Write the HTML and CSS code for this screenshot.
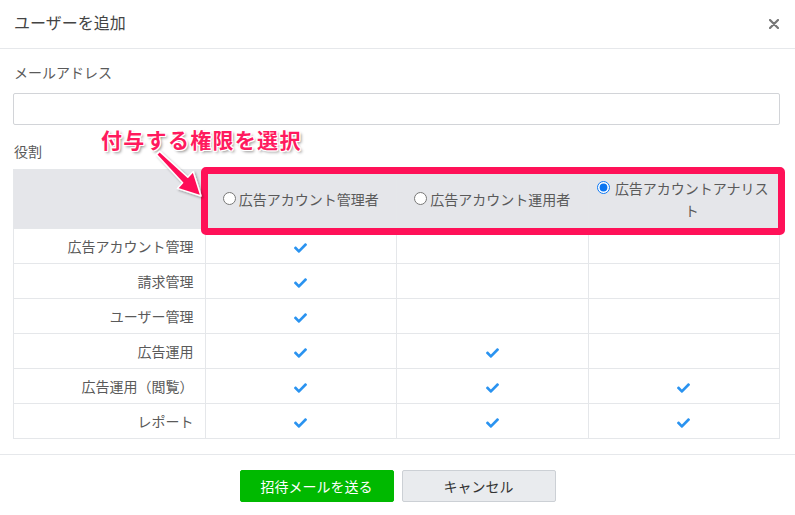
FILE: index.html
```html
<!DOCTYPE html>
<html lang="ja">
<head>
<meta charset="utf-8">
<title>ユーザーを追加</title>
<link rel="stylesheet" href="styles.css">
</head>
<body>
<div class="modal">
  <div class="modal-header">
    <h1 class="title">ユーザーを追加</h1>
    <svg class="close" width="10" height="10" viewBox="0 0 10 10"><path d="M1 1L9 9M9 1L1 9" stroke="#777" stroke-width="2.2" stroke-linecap="round"/></svg>
  </div>
  <div class="modal-body">
    <div class="field-label">メールアドレス</div>
    <input class="input" type="text">
    <div class="field-label role-label">役割</div>
    <table class="roles">
      <thead>
        <tr>
          <th></th>
          <th><label class="radio"><input type="radio" name="role"><span>広告アカウント管理者</span></label></th>
          <th><label class="radio"><input type="radio" name="role"><span>広告アカウント運用者</span></label></th>
          <th><label class="radio"><input type="radio" name="role" checked><span>広告アカウントアナリスト</span></label></th>
        </tr>
      </thead>
      <tbody>
        <tr><td class="name">広告アカウント管理</td><td><svg class="chk" viewBox="0 64 512 384"><path d="M173.898 439.404l-166.4-166.4c-9.997-9.997-9.997-26.206 0-36.204l36.203-36.204c9.997-9.998 26.207-9.998 36.204 0L192 312.69 432.095 72.596c9.997-9.997 26.207-9.997 36.204 0l36.203 36.204c9.997 9.997 9.997 26.206 0 36.204l-294.4 294.401c-9.998 9.997-26.207 9.997-36.204-.001z"/></svg></td><td></td><td></td></tr>
        <tr><td class="name">請求管理</td><td><svg class="chk" viewBox="0 64 512 384"><path d="M173.898 439.404l-166.4-166.4c-9.997-9.997-9.997-26.206 0-36.204l36.203-36.204c9.997-9.998 26.207-9.998 36.204 0L192 312.69 432.095 72.596c9.997-9.997 26.207-9.997 36.204 0l36.203 36.204c9.997 9.997 9.997 26.206 0 36.204l-294.4 294.401c-9.998 9.997-26.207 9.997-36.204-.001z"/></svg></td><td></td><td></td></tr>
        <tr><td class="name">ユーザー管理</td><td><svg class="chk" viewBox="0 64 512 384"><path d="M173.898 439.404l-166.4-166.4c-9.997-9.997-9.997-26.206 0-36.204l36.203-36.204c9.997-9.998 26.207-9.998 36.204 0L192 312.69 432.095 72.596c9.997-9.997 26.207-9.997 36.204 0l36.203 36.204c9.997 9.997 9.997 26.206 0 36.204l-294.4 294.401c-9.998 9.997-26.207 9.997-36.204-.001z"/></svg></td><td></td><td></td></tr>
        <tr><td class="name">広告運用</td><td><svg class="chk" viewBox="0 64 512 384"><path d="M173.898 439.404l-166.4-166.4c-9.997-9.997-9.997-26.206 0-36.204l36.203-36.204c9.997-9.998 26.207-9.998 36.204 0L192 312.69 432.095 72.596c9.997-9.997 26.207-9.997 36.204 0l36.203 36.204c9.997 9.997 9.997 26.206 0 36.204l-294.4 294.401c-9.998 9.997-26.207 9.997-36.204-.001z"/></svg></td><td><svg class="chk" viewBox="0 64 512 384"><path d="M173.898 439.404l-166.4-166.4c-9.997-9.997-9.997-26.206 0-36.204l36.203-36.204c9.997-9.998 26.207-9.998 36.204 0L192 312.69 432.095 72.596c9.997-9.997 26.207-9.997 36.204 0l36.203 36.204c9.997 9.997 9.997 26.206 0 36.204l-294.4 294.401c-9.998 9.997-26.207 9.997-36.204-.001z"/></svg></td><td></td></tr>
        <tr><td class="name">広告運用（閲覧）</td><td><svg class="chk" viewBox="0 64 512 384"><path d="M173.898 439.404l-166.4-166.4c-9.997-9.997-9.997-26.206 0-36.204l36.203-36.204c9.997-9.998 26.207-9.998 36.204 0L192 312.69 432.095 72.596c9.997-9.997 26.207-9.997 36.204 0l36.203 36.204c9.997 9.997 9.997 26.206 0 36.204l-294.4 294.401c-9.998 9.997-26.207 9.997-36.204-.001z"/></svg></td><td><svg class="chk" viewBox="0 64 512 384"><path d="M173.898 439.404l-166.4-166.4c-9.997-9.997-9.997-26.206 0-36.204l36.203-36.204c9.997-9.998 26.207-9.998 36.204 0L192 312.69 432.095 72.596c9.997-9.997 26.207-9.997 36.204 0l36.203 36.204c9.997 9.997 9.997 26.206 0 36.204l-294.4 294.401c-9.998 9.997-26.207 9.997-36.204-.001z"/></svg></td><td><svg class="chk" viewBox="0 64 512 384"><path d="M173.898 439.404l-166.4-166.4c-9.997-9.997-9.997-26.206 0-36.204l36.203-36.204c9.997-9.998 26.207-9.998 36.204 0L192 312.69 432.095 72.596c9.997-9.997 26.207-9.997 36.204 0l36.203 36.204c9.997 9.997 9.997 26.206 0 36.204l-294.4 294.401c-9.998 9.997-26.207 9.997-36.204-.001z"/></svg></td></tr>
        <tr><td class="name">レポート</td><td><svg class="chk" viewBox="0 64 512 384"><path d="M173.898 439.404l-166.4-166.4c-9.997-9.997-9.997-26.206 0-36.204l36.203-36.204c9.997-9.998 26.207-9.998 36.204 0L192 312.69 432.095 72.596c9.997-9.997 26.207-9.997 36.204 0l36.203 36.204c9.997 9.997 9.997 26.206 0 36.204l-294.4 294.401c-9.998 9.997-26.207 9.997-36.204-.001z"/></svg></td><td><svg class="chk" viewBox="0 64 512 384"><path d="M173.898 439.404l-166.4-166.4c-9.997-9.997-9.997-26.206 0-36.204l36.203-36.204c9.997-9.998 26.207-9.998 36.204 0L192 312.69 432.095 72.596c9.997-9.997 26.207-9.997 36.204 0l36.203 36.204c9.997 9.997 9.997 26.206 0 36.204l-294.4 294.401c-9.998 9.997-26.207 9.997-36.204-.001z"/></svg></td><td><svg class="chk" viewBox="0 64 512 384"><path d="M173.898 439.404l-166.4-166.4c-9.997-9.997-9.997-26.206 0-36.204l36.203-36.204c9.997-9.998 26.207-9.998 36.204 0L192 312.69 432.095 72.596c9.997-9.997 26.207-9.997 36.204 0l36.203 36.204c9.997 9.997 9.997 26.206 0 36.204l-294.4 294.401c-9.998 9.997-26.207 9.997-36.204-.001z"/></svg></td></tr>
      </tbody>
    </table>
  </div>
  <div class="modal-footer">
    <button class="btn btn-primary" type="button">招待メールを送る</button>
    <button class="btn btn-default" type="button">キャンセル</button>
  </div>

  <div class="highlight"></div>
  <div class="callout">付与する権限を選択</div>
  <svg class="arrow" width="795" height="515" viewBox="0 0 795 515">
    <defs>
      <filter id="sh" x="-20%" y="-20%" width="150%" height="150%">
        <feDropShadow dx="1.5" dy="1.5" stdDeviation="1.2" flood-color="#000" flood-opacity="0.35"/>
      </filter>
    </defs>
    <polygon points="159.6,151.4 187.8,177.2 193.2,171.6 201,196 177.4,188.4 182.6,182.8 156.4,154.6" fill="#ff1158" stroke="#fff" stroke-width="1.5" stroke-linejoin="round" filter="url(#sh)"/>
  </svg>
</div>
</body>
</html>
```

FILE: styles.css
```css
* { box-sizing: border-box; }
html, body { margin: 0; padding: 0; background: #fff; }
body {
  font-family: "Noto Sans CJK JP", "Noto Sans", "Liberation Sans", sans-serif;
  font-size: 14px;
  color: #5a5a5a;
}
.modal {
  position: relative;
  width: 795px;
  height: 515px;
  background: #fff;
}
.modal-header {
  height: 49px;
  border-bottom: 1px solid #e6e8eb;
  display: flex;
  align-items: flex-start;
  justify-content: space-between;
  padding: 11px 16px 0 14px;
}
.title {
  margin: 0;
  font-size: 16px;
  line-height: 22px;
  font-weight: normal;
  color: #444;
}
.close { margin-top: 8px; }
.modal-body {
  padding: 13px 15px 15px 13px;
}
.field-label {
  font-size: 14px;
  line-height: 20px;
  color: #5a5a5a;
  padding-left: 1px;
}
.input {
  display: block;
  width: 100%;
  height: 32px;
  margin-top: 11px;
  border: 1px solid #d2d4d8;
  border-radius: 2px;
  background: #fff;
  outline: none;
}
.role-label { margin-top: 16px; margin-bottom: 8px; }
.roles {
  width: 767px;
  border-collapse: collapse;
  table-layout: fixed;
}
.roles th, .roles td {
  border: 1px solid #e5e7ea;
  width: 25%;
  text-align: center;
  vertical-align: middle;
  padding: 0 8px;
}
.roles thead th {
  background: #e5e6ea;
  height: 59px;
  font-weight: normal;
  color: #5a5a5a;
}
.roles td { height: 35px; }
.roles td.name { text-align: right; padding-right: 11px; }
.radio {
  display: inline-flex;
  align-items: flex-start;
  line-height: 22px;
  color: #5a5a5a;
}
.radio input {
  width: 13px;
  height: 13px;
  margin: 4px 3px 0 0;
  flex: none;
  accent-color: #0a74f0;
}
.radio span { text-align: center; }
.chk {
  width: 13px;
  height: 10px;
  fill: #2a93f0;
  display: inline-block;
  vertical-align: middle;
}
.modal-footer {
  border-top: 1px solid #e6e8eb;
  display: flex;
  justify-content: center;
  gap: 8px;
  padding-top: 15px;
}
.btn {
  width: 154px;
  height: 32px;
  font-family: inherit;
  font-size: 14px;
  border-radius: 2px;
  cursor: pointer;
}
.btn-primary {
  background: #00b900;
  border: 1px solid #00b900;
  color: #fff;
}
.btn-default {
  background: #e9ebee;
  border: 1px solid #ccd0d5;
  color: #333;
}
.highlight {
  position: absolute;
  left: 201px;
  top: 167px;
  width: 584px;
  height: 68px;
  border: 7px solid #ff1158;
  border-radius: 5px;
  pointer-events: none;
}
.callout {
  position: absolute;
  left: 101px;
  top: 124px;
  font-size: 21px;
  line-height: 30px;
  font-weight: bold;
  color: #ff1a5e;
  letter-spacing: 1.3px;
  text-shadow:
    1px 0 0 #fff, -1px 0 0 #fff, 0 1px 0 #fff, 0 -1px 0 #fff,
    1px 1px 0 #fff, -1px -1px 0 #fff, 1px -1px 0 #fff, -1px 1px 0 #fff,
    2px 2px 3px rgba(0,0,0,0.45);
}
.arrow {
  position: absolute;
  left: 0;
  top: 0;
  pointer-events: none;
}
```
